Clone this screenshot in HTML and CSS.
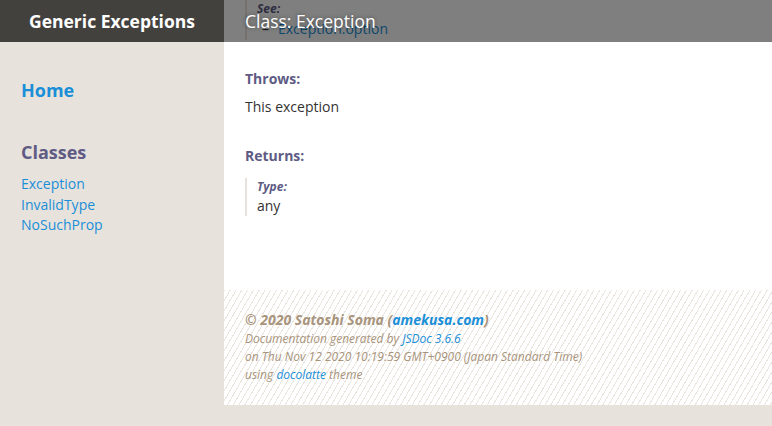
FILE: index.html
```html
<!DOCTYPE html>
<html lang="en">
<head>
<meta charset="utf-8">
<title>Class: Exception</title>
<link rel="stylesheet" href="styles.css">
</head>
<body>
<header class="topbar">
  <div class="brand">Generic Exceptions</div>
  <div class="page-title">Class: Exception</div>
</header>
<div class="layout">
  <nav class="sidebar">
    <a class="home" href="#">Home</a>
    <h3 class="nav-heading">Classes</h3>
    <ul class="nav-list">
      <li><a href="#">Exception</a></li>
      <li><a href="#">InvalidType</a></li>
      <li><a href="#">NoSuchProp</a></li>
    </ul>
  </nav>
  <div class="main">
    <article class="content">
      <div class="param-block see-block">
        <div class="param-label">See:</div>
        <div class="see-item"><span class="dash">–</span><a href="#">Exception.option</a></div>
      </div>
      <h5 class="section-title throws-title">Throws:</h5>
      <p class="desc">This exception</p>
      <h5 class="section-title returns-title">Returns:</h5>
      <div class="param-block type-block">
        <div class="param-label">Type:</div>
        <div class="type-value">any</div>
      </div>
    </article>
    <footer class="footer">
      <div class="copyright">© 2020 Satoshi Soma (<a href="#">amekusa.com</a>)</div>
      <div class="generated">Documentation generated by <a href="#">JSDoc 3.6.6</a></div>
      <div class="generated">on Thu Nov 12 2020 10:19:59 GMT+0900 (Japan Standard Time)</div>
      <div class="generated">using <a href="#">docolatte</a> theme</div>
    </footer>
  </div>
</div>
</body>
</html>
```
FILE: styles.css
```css
html, body {
  margin: 0;
  padding: 0;
}
body {
  background: #e8e2dc;
  font-family: "Open Sans", "Noto Sans", sans-serif;
  color: #333;
  height: 426px;
  overflow: hidden;
}
a {
  text-decoration: none;
  color: #1a8fd8;
}
.topbar {
  position: absolute;
  top: 0;
  left: 0;
  right: 0;
  height: 42px;
  display: flex;
  z-index: 10;
}
.brand {
  width: 224px;
  background: #43413e;
  color: #fff;
  font-weight: 700;
  font-size: 17.5px;
  line-height: 42px;
  text-align: center;
}
.page-title {
  flex: 1;
  background: rgba(0, 0, 0, 0.5);
  color: #fff;
  font-size: 17.5px;
  line-height: 42px;
  padding-left: 21px;
  text-shadow: 0 0 4px rgba(0, 0, 0, 0.45);
}
.layout {
  display: grid;
  grid-template-columns: 224px 1fr;
}
.sidebar {
  padding: 78px 0 0 21px;
}
.home {
  display: block;
  font-size: 18px;
  font-weight: 700;
  line-height: 24px;
  color: #1a8fd8;
}
.nav-heading {
  margin: 38px 0 0;
  font-size: 18px;
  line-height: 24px;
  font-weight: 700;
  color: #5e5b84;
}
.nav-list {
  list-style: none;
  margin: 10px 0 0;
  padding: 0;
  font-size: 14px;
  line-height: 20.5px;
}
.main {
  display: flex;
  flex-direction: column;
}
.content {
  background: #fff;
  padding: 0 21px 74px;
}
.param-block {
  border-left: 2px solid #e8e2dc;
  padding-left: 10px;
}
.param-label {
  font-size: 12px;
  line-height: 18px;
  font-weight: 700;
  font-style: italic;
  color: #5e5b84;
}
.see-item {
  font-size: 14px;
  line-height: 22px;
}
.dash {
  display: inline-block;
  width: 16px;
  color: #333;
  padding-left: 5px;
}
.section-title {
  margin: 0;
  font-size: 14px;
  line-height: 20px;
  font-weight: 700;
  color: #5e5b84;
}
.throws-title {
  margin-top: 29px;
}
.desc {
  margin: 8px 0 0;
  font-size: 14px;
  line-height: 20px;
}
.returns-title {
  margin-top: 29px;
}
.type-block {
  margin-top: 12px;
}
.type-value {
  font-size: 14px;
  line-height: 20px;
}
.footer {
  height: 115px;
  box-sizing: border-box;
  padding: 20px 21px 0;
  color: #a8947c;
  font-style: italic;
  background-color: #fff;
  background-image: repeating-linear-gradient(120deg, #ebe5df 0, #ebe5df 1px, #fff 1px, #fff 5px);
}
.footer a {
  color: #1a8fd8;
}
.copyright {
  font-size: 14px;
  line-height: 20px;
  font-weight: 700;
}
.generated {
  font-size: 12px;
  line-height: 18px;
}
```
